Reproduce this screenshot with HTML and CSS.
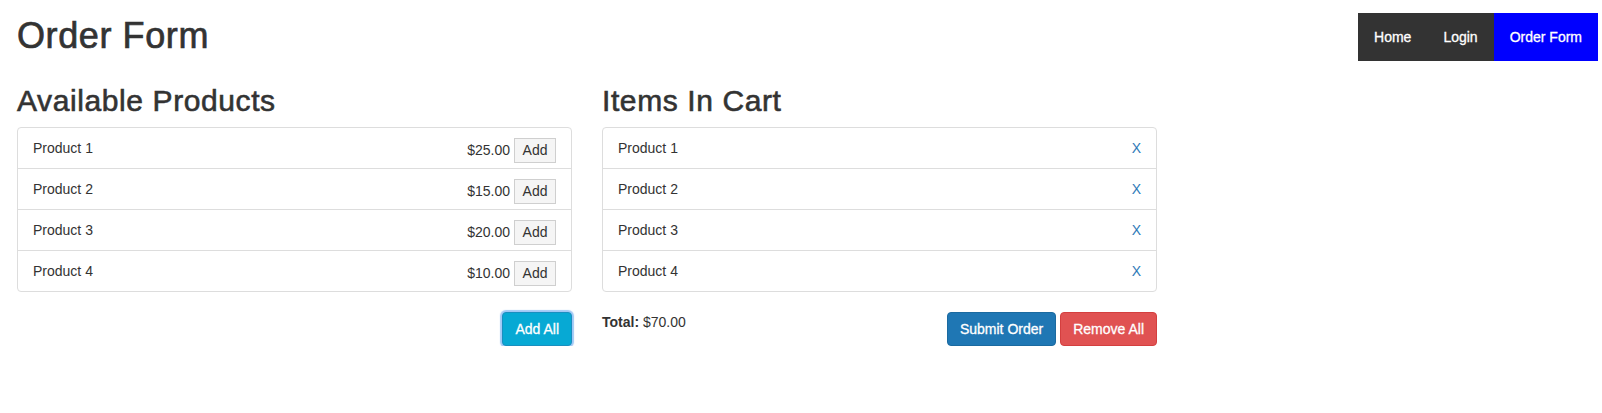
FILE: index.html
```html
<!DOCTYPE html>
<html lang="en">
<head>
<meta charset="utf-8">
<title>Order Form</title>
<link rel="stylesheet" href="styles.css">
</head>
<body>
<header class="topbar">
  <h1 class="title">Order Form</h1>
  <nav class="nav">
    <a class="nav-link" href="#">Home</a>
    <a class="nav-link" href="#">Login</a>
    <a class="nav-link active" href="#">Order Form</a>
  </nav>
</header>
<main class="columns">
  <section class="col">
    <h2 class="col-title">Available Products</h2>
    <ul class="list">
      <li class="item"><span class="name">Product 1</span><span class="price-group"><span class="price">$25.00</span><button class="add-btn">Add</button></span></li>
      <li class="item"><span class="name">Product 2</span><span class="price-group"><span class="price">$15.00</span><button class="add-btn">Add</button></span></li>
      <li class="item"><span class="name">Product 3</span><span class="price-group"><span class="price">$20.00</span><button class="add-btn">Add</button></span></li>
      <li class="item"><span class="name">Product 4</span><span class="price-group"><span class="price">$10.00</span><button class="add-btn">Add</button></span></li>
    </ul>
    <div class="actions actions-right">
      <button class="btn btn-info">Add All</button>
    </div>
  </section>
  <section class="col">
    <h2 class="col-title">Items In Cart</h2>
    <ul class="list">
      <li class="item"><span class="name">Product 1</span><a class="remove" href="#">X</a></li>
      <li class="item"><span class="name">Product 2</span><a class="remove" href="#">X</a></li>
      <li class="item"><span class="name">Product 3</span><a class="remove" href="#">X</a></li>
      <li class="item"><span class="name">Product 4</span><a class="remove" href="#">X</a></li>
    </ul>
    <div class="actions">
      <p class="total"><strong>Total:</strong> $70.00</p>
      <div class="btn-group">
        <button class="btn btn-primary">Submit Order</button>
        <button class="btn btn-danger">Remove All</button>
      </div>
    </div>
  </section>
</main>
</body>
</html>
```
FILE: styles.css
```css
body {
  margin: 0;
  font-family: "Liberation Sans", Arial, sans-serif;
  font-size: 14px;
  line-height: 20px;
  color: #333;
  background: #fff;
}

.topbar {
  display: flex;
  justify-content: space-between;
  align-items: flex-start;
  padding: 13px 4px 0 17px;
}

.title {
  margin: 3px 0 0;
  font-size: 36px;
  line-height: 39px;
  font-weight: 400;
  letter-spacing: 0.6px;
  -webkit-text-stroke: 0.7px #333;
}

.nav {
  display: flex;
  height: 48px;
  background: #333;
}

.nav-link {
  padding: 0 16px;
  line-height: 48px;
  color: #fff;
  text-decoration: none;
  -webkit-text-stroke: 0.3px #fff;
}

.nav-link.active {
  background: #0000ff;
}

.columns {
  display: flex;
  gap: 30px;
  padding: 0 17px;
}

.col {
  width: 555px;
}

.col-title {
  margin: 23px 0 10px;
  font-size: 30px;
  line-height: 33px;
  font-weight: 400;
  letter-spacing: 0.6px;
  -webkit-text-stroke: 0.6px #333;
}

.list {
  list-style: none;
  margin: 0 0 20px;
  padding: 0;
  border: 1px solid #ddd;
  border-radius: 4px;
}

.item {
  display: flex;
  justify-content: space-between;
  align-items: flex-start;
  padding: 10px 15px;
}

.item + .item {
  border-top: 1px solid #ddd;
}

.price-group {
  display: block;
  height: 20px;
  white-space: nowrap;
}

.add-btn {
  box-sizing: border-box;
  height: 25px;
  margin: 0 0 0 4px;
  padding: 0 7.5px;
  border: 1px solid #cfcfcf;
  border-radius: 0;
  background: #f5f5f5;
  font-family: inherit;
  font-size: 14px;
  line-height: 23px;
  color: #333;
  vertical-align: baseline;
}

.remove {
  color: #2e7ab8;
  text-decoration: none;
}

.actions {
  display: flex;
  justify-content: space-between;
  align-items: flex-start;
}

.actions-right {
  justify-content: flex-end;
}

.total {
  margin: 0;
}

.btn-group {
  display: flex;
  gap: 4px;
}

.btn {
  box-sizing: border-box;
  height: 34px;
  padding: 6px 12px;
  border: 1px solid transparent;
  border-radius: 4px;
  font-family: inherit;
  font-size: 14px;
  line-height: 20px;
  color: #fff;
  -webkit-text-stroke: 0.3px #fff;
}

.btn-info {
  background: #07a9d4;
  border-color: #1a8fbf;
  box-shadow: 0 0 1px 2px rgba(110, 170, 240, 0.65);
}

.btn-primary {
  background: #1f77b4;
  border-color: #1b6aa0;
}

.btn-danger {
  background: #e05252;
  border-color: #d43f3f;
}
```
